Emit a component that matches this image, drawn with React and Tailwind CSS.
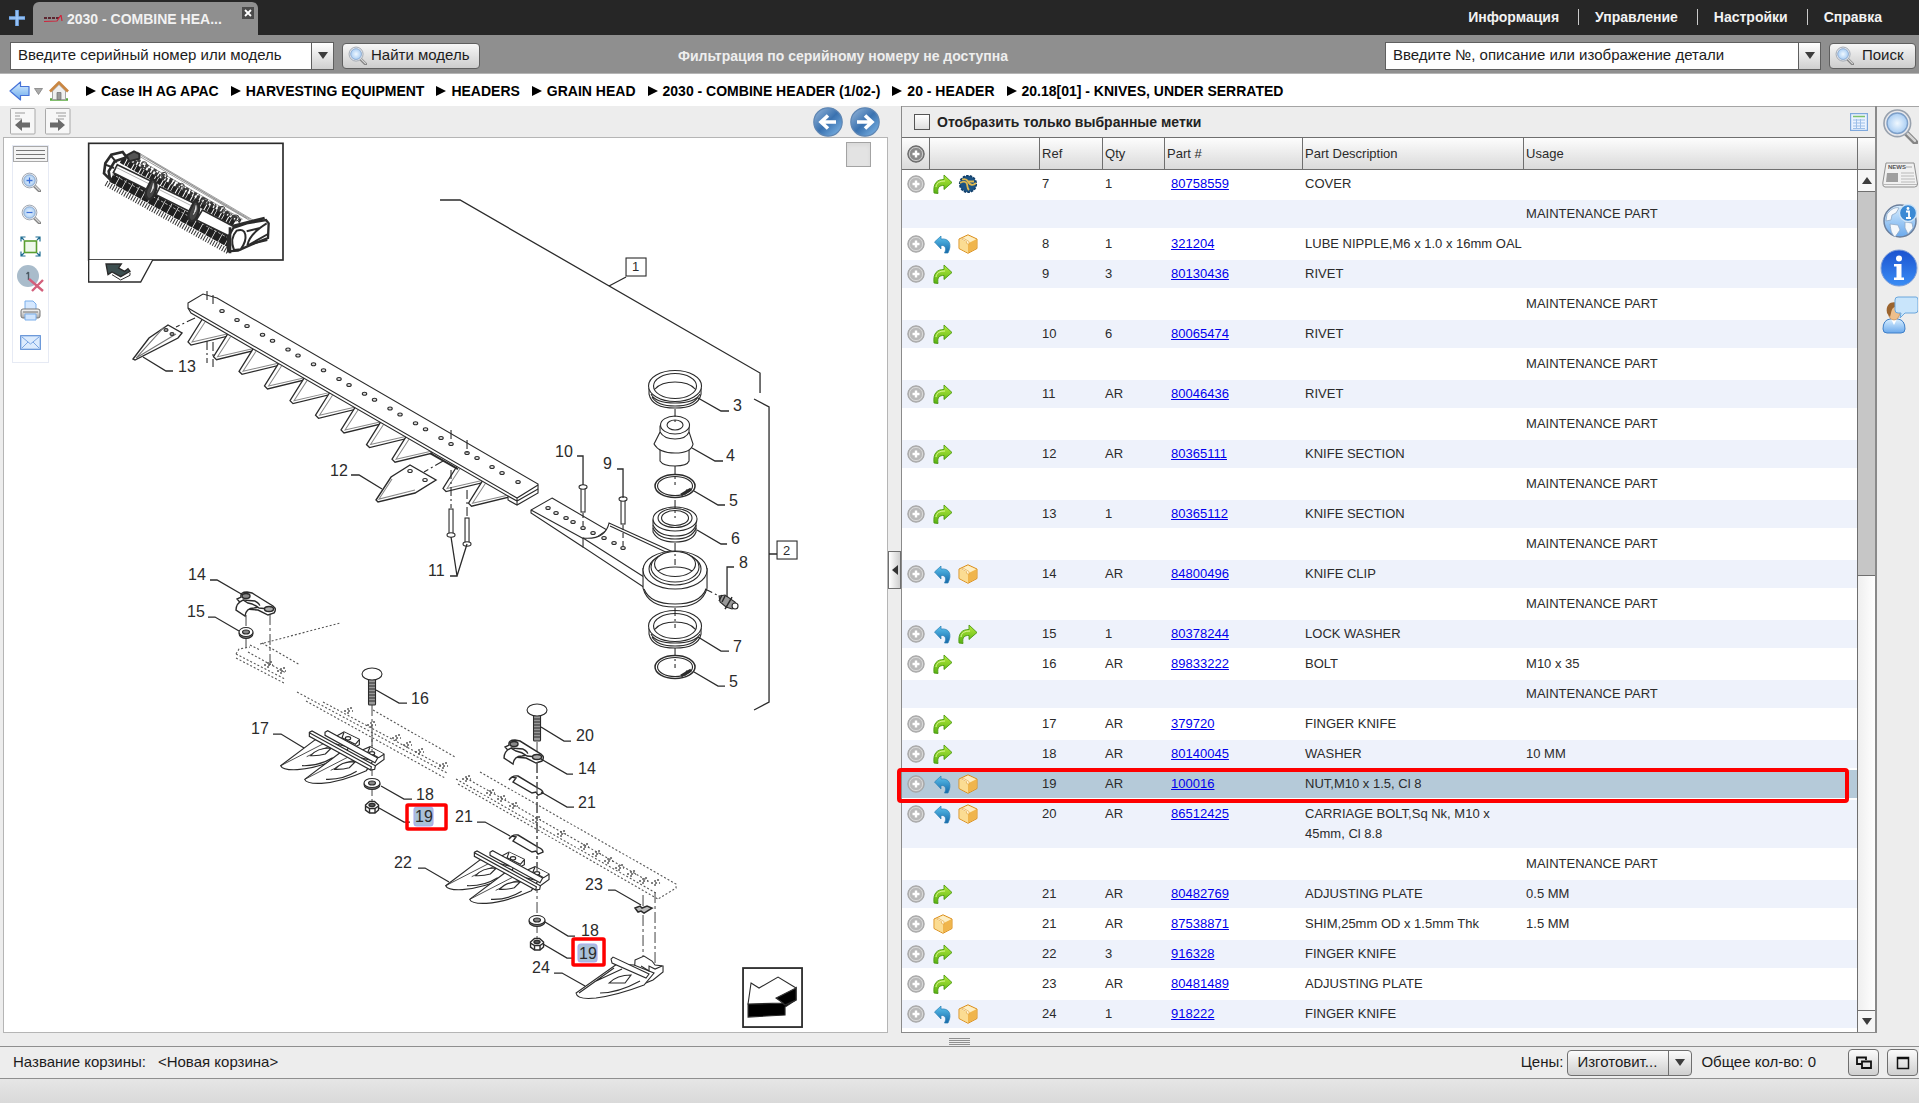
import { useState } from 'react'
import clsx from 'clsx'

const MAINT = { usage: 'MAINTENANCE PART' }

const rows = [
  { ref: '7', qty: '1', part: '80758559', desc: 'COVER', icons: ['next', 'reman'] },
  MAINT,
  { ref: '8', qty: '1', part: '321204', desc: 'LUBE NIPPLE,M6 x 1.0 x 16mm OAL', icons: ['prev', 'box'] },
  { ref: '9', qty: '3', part: '80130436', desc: 'RIVET', icons: ['next'] },
  MAINT,
  { ref: '10', qty: '6', part: '80065474', desc: 'RIVET', icons: ['next'] },
  MAINT,
  { ref: '11', qty: 'AR', part: '80046436', desc: 'RIVET', icons: ['next'] },
  MAINT,
  { ref: '12', qty: 'AR', part: '80365111', desc: 'KNIFE SECTION', icons: ['next'] },
  MAINT,
  { ref: '13', qty: '1', part: '80365112', desc: 'KNIFE SECTION', icons: ['next'] },
  MAINT,
  { ref: '14', qty: 'AR', part: '84800496', desc: 'KNIFE CLIP', icons: ['prev', 'box'] },
  MAINT,
  { ref: '15', qty: '1', part: '80378244', desc: 'LOCK WASHER', icons: ['prev', 'next'] },
  { ref: '16', qty: 'AR', part: '89833222', desc: 'BOLT', usage: 'M10 x 35', icons: ['next'] },
  MAINT,
  { ref: '17', qty: 'AR', part: '379720', desc: 'FINGER KNIFE', icons: ['next'] },
  { ref: '18', qty: 'AR', part: '80140045', desc: 'WASHER', usage: '10 MM', icons: ['next'] },
  { ref: '19', qty: 'AR', part: '100016', desc: 'NUT,M10 x 1.5, Cl 8', icons: ['prev', 'box'], selected: true },
  { ref: '20', qty: 'AR', part: '86512425', desc: 'CARRIAGE BOLT,Sq Nk, M10 x 45mm, Cl 8.8', icons: ['prev', 'box'] },
  MAINT,
  { ref: '21', qty: 'AR', part: '80482769', desc: 'ADJUSTING PLATE', usage: '0.5 MM', icons: ['next'] },
  { ref: '21', qty: 'AR', part: '87538871', desc: 'SHIM,25mm OD x 1.5mm Thk', usage: '1.5 MM', icons: ['box'] },
  { ref: '22', qty: '3', part: '916328', desc: 'FINGER KNIFE', icons: ['next'] },
  { ref: '23', qty: 'AR', part: '80481489', desc: 'ADJUSTING PLATE', icons: ['next'] },
  { ref: '24', qty: '1', part: '918222', desc: 'FINGER KNIFE', icons: ['prev', 'box'] },
]

const crumbs = [
  'Case IH AG APAC',
  'HARVESTING EQUIPMENT',
  'HEADERS',
  'GRAIN HEAD',
  '2030 - COMBINE HEADER (1/02-)',
  '20 - HEADER',
  '20.18[01] - KNIVES, UNDER SERRATED',
]

const menu = ['Информация', 'Управление', 'Настройки', 'Справка']

/* ---------- icons ---------- */

const Defs = () => (
  <svg className="absolute size-0" aria-hidden="true">
    <defs>
      <linearGradient id="green" x1="0" y1="0" x2="0" y2="1">
        <stop offset="0" stopColor="#b6ec3c" />
        <stop offset="1" stopColor="#57b012" />
      </linearGradient>
      <linearGradient id="teal" x1="0" y1="0" x2="0" y2="1">
        <stop offset="0" stopColor="#5cc3ee" />
        <stop offset="1" stopColor="#1668a8" />
      </linearGradient>
      <linearGradient id="sky" x1="0" y1="0" x2="0" y2="1">
        <stop offset="0" stopColor="#d9efff" />
        <stop offset="1" stopColor="#6ba9ec" />
      </linearGradient>
      <linearGradient id="navy" x1="0" y1="0" x2="1" y2="1">
        <stop offset="0" stopColor="#9dbbdc" />
        <stop offset="0.5" stopColor="#3a72b0" />
        <stop offset="1" stopColor="#86bdec" />
      </linearGradient>
      <linearGradient id="royal" x1="0" y1="0" x2="0" y2="1">
        <stop offset="0" stopColor="#1b52cf" />
        <stop offset="1" stopColor="#3a8df5" />
      </linearGradient>
      <linearGradient id="steel" x1="0" y1="0" x2="0" y2="1">
        <stop offset="0" stopColor="#fafafa" />
        <stop offset="1" stopColor="#a8a8a8" />
      </linearGradient>
      <radialGradient id="lens">
        <stop offset="0" stopColor="#f0f8ff" />
        <stop offset="1" stopColor="#a9cdf3" />
      </radialGradient>
    </defs>
  </svg>
)

const PlusCircle = ({ dark }) => (
  <svg viewBox="0 0 18 18" className="size-[18px]">
    <circle cx="9" cy="9" r="8.2" fill={dark ? '#8a8a8a' : '#b9b9b9'} stroke={dark ? '#5e5e5e' : '#a2a2a2'} />
    <circle cx="9" cy="9" r="6.6" fill="none" stroke={dark ? '#c9c9c9' : '#d8d8d8'} />
    <path d="M9 5.500v7M5.500 9h7" stroke="#fff" strokeWidth="2.4" />
  </svg>
)

const NextIcon = () => (
  <svg viewBox="0 0 20 20" className="size-5">
    <path
      d="M1 19C0 9 4 5.500 11 5.500V1l8 7.500-8 7V11.500C6.500 11.300 4 13 5 19.500z"
      fill="url(#green)"
      stroke="#4c9a12"
      strokeWidth="0.9"
      strokeLinejoin="round"
    />
    <path d="M3 13c.5-4 3.500-6 9-6" fill="none" stroke="#dcf89a" strokeWidth="1" />
  </svg>
)

const PrevIcon = () => (
  <svg viewBox="0 0 20 20" className="size-5">
    <path
      d="M1.500 8 8 2v3c8-1 11.500 5 7 14h-3.500C14 14 12 11 8 11.500V15z"
      fill="url(#teal)"
      stroke="#2a7fb5"
      strokeWidth="0.7"
      strokeLinejoin="round"
    />
  </svg>
)

const BoxIcon = () => (
  <svg viewBox="0 0 20 20" className="size-5">
    <path d="M10 .8 19 5v9.500L10 19.300 1 14.500V5z" fill="#f8cf74" stroke="#d98e1f" strokeWidth="1" strokeLinejoin="round" />
    <path d="M1.600 5.300 10 9.500v9.200l-8.400-4.500z" fill="#fbdc92" />
    <path d="M18.400 5.300 10 9.500v9.200l8.400-4.500z" fill="#f0b54c" />
    <path d="M10 1.500 18 5.200 10 9.200 2 5.200z" fill="#fdeec4" />
    <path d="m5 4 6 3.500v3l-2.500-1.200V7.500L3.500 5z" fill="#fff6da" stroke="#e0a038" strokeWidth="0.6" />
  </svg>
)

const RemanIcon = () => (
  <svg viewBox="0 0 20 20" className="size-5">
    <circle cx="10" cy="10" r="8.300" fill="#1c5384" stroke="#0f3d68" strokeWidth="1.6" strokeDasharray="2.5 1.2" />
    <path
      d="M2 9c3-2 6-2 7 1 .5 2 0 4 2 6M18 9c-3 3-6 2-8-1M4 5.500c3-1 5 0 6 2h6"
      fill="none"
      stroke="#e0b950"
      strokeWidth="1.800"
    />
  </svg>
)

const rowIcons = { next: NextIcon, prev: PrevIcon, box: BoxIcon, reman: RemanIcon }

const Magnifier = ({ sign, className = 'size-5' }) => (
  <svg viewBox="0 0 20 20" className={className}>
    <path d="m13 13.500 5.500 5.500" stroke="#858585" strokeWidth="3.2" strokeLinecap="round" />
    <path d="m13.500 13.500 4.800 4.800" stroke="#d6d6d6" strokeWidth="1.3" strokeLinecap="round" />
    <circle cx="8.500" cy="8.500" r="7.400" fill="#e9e9ec" stroke="#98a1ad" strokeWidth="0.9" />
    <circle cx="8.500" cy="8.500" r="5.700" fill="url(#lens)" stroke="#7d9fc8" strokeWidth="0.8" />
    {sign === 'in' && <path d="M8.500 5.500v6M5.500 8.500h6" stroke="#3a6fd8" strokeWidth="1.3" />}
    {sign === 'out' && <path d="M5.500 8.500h6" stroke="#3a6fd8" strokeWidth="1.3" />}
  </svg>
)

const BackArrow = () => (
  <svg viewBox="0 0 21 20" className="h-5 w-[21px]">
    <path d="M1 10 11.500 1v4.500H20v9h-8.500V19z" fill="url(#sky)" stroke="#4673d8" strokeWidth="1.2" strokeLinejoin="round" />
  </svg>
)

const HomeIcon = () => (
  <svg viewBox="0 0 20 20" className="size-5">
    <path d="M1 18.500h18" stroke="#58a83e" strokeWidth="2.500" />
    <path d="M3.500 10v8.500h13V10L10 3.500z" fill="#efefef" stroke="#a5a5a5" />
    <path d="m1 10.500 9-9 9 9" fill="none" stroke="#c98642" strokeWidth="2.600" strokeLinejoin="round" />
    <path d="M8 11.500h4v7H8z" fill="#9a9a9a" stroke="#6e6e6e" strokeWidth="0.7" />
  </svg>
)

const PageIcon = ({ right }) => (
  <svg viewBox="0 0 26 27" className="h-[27px] w-[26px]">
    <rect x="0.500" y="0.500" width="24.500" height="25.500" rx="1" fill="#f7f7f7" stroke="#a9a9a9" />
    <path d={right ? 'M11 5h10M13 8h8M11 11h8' : 'M5 5h10M5 8h5M5 11h7'} stroke="#9b9b9b" />
    <path d={right ? 'M20 17l-7-6v3.500H5v5h8V23z' : 'M5 17l7-6v3.500h8v5h-8V23z'} fill="#6a6a6a" />
  </svg>
)

const RoundArrow = ({ right }) => (
  <svg viewBox="0 0 30 30" className="size-[30px]">
    <circle cx="15" cy="15" r="14.200" fill="url(#navy)" stroke="#5f86b3" strokeWidth="1.2" />
    <path
      d={right ? 'M7 15h14M15 8.500l7 6.500-7 6.500' : 'M23 15H9M15 8.500 8 15l7 6.500'}
      fill="none"
      stroke="#fff"
      strokeWidth="3.600"
    />
  </svg>
)

const FitIcon = () => (
  <svg viewBox="0 0 21 21" className="size-[21px]">
    <rect x="4.500" y="5" width="12" height="11.500" fill="#eef8ea" stroke="#5a9e30" strokeWidth="1.6" />
    <path
      d="M1 5.500V1h4.500M15.500 1H20v4.500M20 15.500V20h-4.500M5.500 20H1v-4.500M1 1l3 3M20 1l-3 3M20 20l-3-3M1 20l3-3"
      fill="none"
      stroke="#1f6d92"
      strokeWidth="1.2"
    />
  </svg>
)

const MarkerIcon = () => (
  <svg viewBox="0 0 27 27" className="size-[27px]">
    <circle cx="11" cy="11" r="11" fill="#a9bccb" />
    <path d="M11.500 7v8M9.500 9l2-2" stroke="#4c5a64" strokeWidth="1.4" />
    <path d="m12 14 14 12M26 15 15 26" stroke="#d3607c" strokeWidth="2.400" />
  </svg>
)

const PrintIcon = () => (
  <svg viewBox="0 0 21 21" className="size-[21px]">
    <path d="M5 1h8l3 3v6H5z" fill="#d5e8ff" stroke="#7aaeea" />
    <rect x="1" y="9" width="19" height="9" rx="2" fill="url(#steel)" stroke="#777" />
    <path d="M5 14h11v6H5z" fill="#cfe4fd" stroke="#7aaeea" />
    <path d="M3 12h15" stroke="#777" />
  </svg>
)

const MailIcon = () => (
  <svg viewBox="0 0 21 15" className="h-[15px] w-[21px]">
    <rect x="0.700" y="0.700" width="19.600" height="13.600" fill="#dcebfd" stroke="#5f8fd6" strokeWidth="1.2" />
    <path d="m2 2 8.500 7L19 2M2 13l6-6M19 13l-6-6" fill="none" stroke="#7ba6e2" />
  </svg>
)

const GridIcon = () => (
  <svg viewBox="0 0 18 18" className="size-[18px]">
    <rect x="0.600" y="0.600" width="16.800" height="16.800" fill="#eaf3ff" stroke="#7fa9dd" strokeWidth="1.2" />
    <path d="M3 3.500h12" stroke="#7cc26a" strokeWidth="1.5" />
    <path d="M3 7h12M3 10h12M3 13h12M3 15.500h12M6.500 6v10M10.500 6v10" stroke="#9dbfe8" />
  </svg>
)

const NewsIcon = () => (
  <svg viewBox="0 0 36 26" className="h-[26px] w-9">
    <path d="M4 1h28l3.500 21q0 3-3 3H3Q.5 25 .8 21z" fill="#f1f1f1" stroke="#8f8f8f" />
    <text x="6" y="7" fontSize="6" fontWeight="bold" fontFamily="Liberation Sans, sans-serif" fill="#555">
      NEWS
    </text>
    <path d="M24 5h6" stroke="#aaa" />
    <path d="M5 11h11v9H4z" fill="#9f9f9f" />
    <path d="M19 11h13M19 14h13M19 17h14M19 20h14M1 22.500h34" stroke="#b9b9b9" />
  </svg>
)

const GlobeIcon = () => (
  <svg viewBox="0 0 36 36" className="size-9">
    <circle cx="18" cy="18" r="16" fill="url(#sky)" stroke="#6b7f9c" strokeWidth="1.5" />
    <path
      d="M5 11c5-6 9-7 12-6l-3 5-4 2-1 5-5 1zM8 21l8 1 2 5-5 7c-4-4-4-6-5-13zM23 19l7 1 1 5-5 6-3-6z"
      fill="#f5f8fb"
      stroke="#8ea8c6"
      strokeWidth="0.8"
    />
    <circle cx="26" cy="10" r="8.500" fill="#3c8ad4" stroke="#cfe4f7" strokeWidth="1.3" />
    <path d="M24 8.500h3V15M24 15h5" fill="none" stroke="#fff" strokeWidth="1.8" />
    <circle cx="26" cy="5.500" r="1.400" fill="#fff" />
  </svg>
)

const InfoIcon = () => (
  <svg viewBox="0 0 38 38" className="size-[38px]">
    <circle cx="19" cy="19" r="18" fill="url(#royal)" stroke="#7f9fd8" />
    <circle cx="19" cy="9.500" r="3" fill="#fff" />
    <path d="M14 15h7.500v13.500H24V31H14v-2.500h2.500v-11H14z" fill="#fff" />
  </svg>
)

const PersonIcon = () => (
  <svg viewBox="0 0 36 38" className="h-[38px] w-9">
    <path d="M1 33q0-9 7-10h8q7 1 7 10 0 4-4 4H5q-4 0-4-4z" fill="url(#sky)" stroke="#3e7fc8" />
    <path d="m9 23 3 6 3-6z" fill="#fff" />
    <ellipse cx="12" cy="16" rx="6" ry="8" fill="#eebf8c" stroke="#b57b43" strokeWidth="0.6" />
    <path d="M5 17C3 7 11 5 15 7l2 3c-5 0-7 2-8 7l-1 4z" fill="#9b642e" />
    <path
      d="M16 1h18q2 0 2 3v10q0 3-3 3H23l-5 5 1-5h-3q-3 0-3-3V4q0-3 3-3z"
      fill="#c9e5fb"
      stroke="#6aa6dc"
    />
  </svg>
)

const Caret = ({ className }) => (
  <svg viewBox="0 0 10 7" className={clsx('h-[7px] w-[10px]', className)}>
    <path d="M0 0h10L5 7z" fill="#3c3c3c" />
  </svg>
)

/* ---------- exploded view ---------- */

const holes = [[222, 311], [451, 444], [467, 453], [477, 458], [492, 467], [502, 473], [518, 482]]
for (let k = 0; k < 9; k++) {
  holes.push([237 + k * 25.5, 320 + k * 14.75])
  if (k < 8) holes.push([247 + k * 25.5, 326 + k * 14.75])
}
const armHoles = [[548, 508], [556, 513], [566, 518], [573, 522], [583, 528], [593, 533], [604, 538], [614, 543], [623, 548]]
const teeth = [0, 1, 2, 3, 4, 5, 6, 7, 8, 10, 11]
const marks = [
  [269, 665], [282, 671], [349, 711], [372, 725], [397, 738], [408, 745], [420, 752], [444, 766], [467, 779],
  [491, 793], [502, 799], [514, 806], [537, 820], [562, 834], [585, 847], [597, 854], [609, 861], [620, 868],
  [632, 874], [644, 881], [656, 883],
]

const labels = [
  [733, 411, '3', 'M698 398l23 13h8'],
  [726, 461, '4', 'M692 448l23 13h8'],
  [729, 506, '5', 'M694 491l24 14h7'],
  [731, 544, '6', 'M697 530l24 14h6'],
  [733, 652, '7', 'M698 637l23 14h8'],
  [729, 687, '5', 'M694 672l24 14h7'],
  [739, 568, '8', 'M734 567h-7v30'],
  [555, 457, '10', 'M577 456h6v29'],
  [603, 469, '9', 'M617 469h6v29'],
  [428, 576, '11', 'M450 576h7l-6-39M457 576l10-32'],
  [330, 476, '12', 'M351 475h8l23 14'],
  [178, 372, '13', 'M173 371h-7l-23-14'],
  [188, 580, '14', 'M210 580h7l26 15'],
  [187, 617, '15', 'M208 617h7l24 14'],
  [411, 704, '16', 'M376 690l23 13h8'],
  [251, 734, '17', 'M273 734h8l23 14'],
  [416, 800, '18', 'M381 786l23 13h8'],
  [415, 822, '19', 'M379 808l25 14h6'],
  [455, 822, '21', 'M477 822h8l25 14'],
  [576, 741, '20', 'M541 727l23 14h7'],
  [578, 774, '14', 'M541 759l26 15h6'],
  [578, 808, '21', 'M541 792l26 15h7'],
  [394, 868, '22', 'M418 868h7l24 14'],
  [585, 890, '23', 'M608 890h7l26 15'],
  [581, 936, '18', 'M545 922l23 14h7'],
  [579, 959, '19', 'M543 944l24 14h5'],
  [532, 973, '24', 'M554 973h8l23 13'],
]

const Collar = ({ y }) => (
  <g transform={`translate(0 ${y})`}>
    <path d="M649 388v6q3 14 26 14t26-14v-6" />
    <path d="M652 397q5 9 23 9t23-9M651 394q4 9 24 9t25-9" />
    <ellipse cx="675" cy="386" rx="26.500" ry="15.500" />
    <ellipse cx="675" cy="386" rx="21.500" ry="12.500" />
    <path d="M655 389q6-7 20-7t20 7" fill="none" />
  </g>
)

const SnapRing = ({ y }) => (
  <g transform={`translate(0 ${y})`}>
    <ellipse cx="675" cy="486" rx="20" ry="11.500" strokeWidth="1.5" />
    <ellipse cx="675" cy="486" rx="17.500" ry="9.500" />
    <path d="M681 495l10-6M684 494l4-4" strokeWidth="3" />
  </g>
)

const Rivet = ({ x, y, flip }) => (
  <g transform={`translate(${x} ${y})`}>
    <rect x="-2" y="0" width="4" height="25" />
    <ellipse cx="0" cy={flip ? 26 : 0} rx="4" ry="2.200" />
  </g>
)

const Bolt = ({ x, y }) => (
  <g transform={`translate(${x} ${y})`}>
    <rect x="-3.500" y="5" width="7" height="26" rx="1" fill="#999" />
    <path d="M-3 9h6M-3 12h6M-3 15h6M-3 18h6M-3 21h6M-3 24h6M-3 27h6" />
    <ellipse cx="0" cy="0" rx="10" ry="6" />
  </g>
)

const Clip = ({ x, y }) => (
  <g transform={`translate(${x} ${y})`} strokeWidth="1.4">
    <path d="M241 597q-1-5 6-5l5 1 21 13q4 3 1 7l-6 2-10-5-12-1-9-10z" />
    <path d="M243 600q-7 3-7 10l9 6q1-8 9-8l5-1q2-3-4-6z" />
    <path d="M243 600l5 3q6 1 11 5l10 1" />
    <ellipse cx="246" cy="596" rx="4" ry="2.500" fill="#888" />
    <ellipse cx="269" cy="609" rx="4.500" ry="2.500" fill="#aaa" />
  </g>
)

const Washer = ({ x, y, r = 8 }) => (
  <g transform={`translate(${x} ${y})`}>
    <ellipse cx="0" cy="1.500" rx={r} ry="5" fill="#777" />
    <ellipse cx="0" cy="0" rx={r} ry="4.500" />
    <ellipse cx="0" cy="0" rx="3.500" ry="2" fill="#888" />
  </g>
)

const Nut = ({ x, y }) => (
  <g transform={`translate(${x} ${y})`} strokeWidth="1.4">
    <path d="M-6.500-2l4-3.500h5l4 3.500v5L3 6h-5.500l-4-3z" />
    <path d="M-6.500-1l4 2.500H3l3.500-2.500M-2.500 1.500V6M3 1.500V6" />
    <ellipse cx="0" cy="-2" rx="3" ry="1.500" fill="#666" />
  </g>
)

const Shim = ({ y }) => (
  <path
    transform={`translate(0 ${y})`}
    d="M509 780q3-5 9-4l20 12q5 2 5 5l-5 2-2-3-4 1-19-11 3-4-4-1z"
    strokeWidth="1.4"
  />
)

const Blade = () => (
  <>
    <path d="M137 208 32 287q6 14 50 12 60-4 135-38l20-30z" />
    <path d="M170 216 34 286M190 226q-20 4-80 34" fill="none" strokeWidth="2.500" />
    <path d="M96 287q50 2 92-24" fill="none" />
    <path d="M122 257q20-24 62-23l-18 18q-20 6-44 5z" />
  </>
)

// one double finger guard, drawn at three units to the pixel
const Guard = ({ x, y }) => (
  <g transform={`translate(${270 + x} ${670 + y}) scale(0.3333)`} strokeWidth="3.500">
    <path d="M200 198l22-12 46 22v16l-24 12z" />
    <path d="M222 187l-6 16 40 20 12-14" />
    <path d="M272 242l28-12 42 22v16l-30 22z" />
    <path d="M300 231l-6 14 32 18 16-10" />
    <ellipse cx="234" cy="205" rx="8" ry="5" />
    <ellipse cx="306" cy="250" rx="8" ry="5" />
    <Blade />
    <g transform="translate(72 41)">
      <Blade />
    </g>
    <path d="M165 187l8-5 150 82-8 14-150-82z" />
    <path d="M118 187l8-4 190 104-2 11-12 2L118 199z" />
    <path d="M118 188l186 102-2 10" fill="none" />
  </g>
)

const ReelSpan = ({ x, y }) => (
  <g transform={`translate(${x} ${y})`}>
    <path d="M8 0l102 50-10 26L-4 24z" strokeWidth="5" />
    <path d="M4 8l100 50" stroke="#888" strokeWidth="2" />
    <path d="M112 42q18 8 12 34t-22 28q-14-10-6-30z" fill="#444" strokeWidth="7" />
    <path d="M116 56q4 14-8 28" stroke="#ccc" strokeWidth="3" />
  </g>
)

const HeaderThumb = () => (
  <g transform="translate(84 138) scale(0.3333)" strokeWidth="4">
    <rect x="14" y="16" width="583" height="350" strokeWidth="5" />
    <path d="M14 366v66h156l36-66" />
    <path d="M66 378h46l-8 12 18 10 10-8 6 8-28 16-26-14-12 8z" fill="#3d4f50" />
    <path d="M138 404v8l-28 14-26-16" fill="none" strokeWidth="3" />

    <path d="M150 40l350 205M160 42l350 206M168 56l330 192M176 72l300 172M190 62l300 180" stroke="#8a8a8a" strokeWidth="2.500" />
    <path d="M150 60l320 186" stroke="#444" strokeWidth="8" strokeDasharray="3 9 10 6" />
    <path d="M112 66l340 190" strokeWidth="19" stroke="#222" strokeDasharray="13 3 7 2" />
    <path d="M140 66l330 184" strokeWidth="12" stroke="#333" strokeDasharray="5 6 9 4" />
    <path d="M84 116l354 196" strokeWidth="34" stroke="#1f1f1f" strokeDasharray="20 2" />
    <path d="M84 108l356 196" strokeWidth="3" stroke="#bbb" strokeDasharray="8 6" />
    <path d="M66 136l370 206" strokeWidth="17" stroke="#333" strokeDasharray="3 5" />
    <ReelSpan x={92} y={80} />
    <ReelSpan x={220} y={146} />
    <path d="M355 216l98 52-10 30-106-52z" strokeWidth="5" />
    <g fill="none" stroke="#444" strokeWidth="3">
      <circle cx="180" cy="80" r="9" />
      <circle cx="240" cy="112" r="9" />
      <circle cx="292" cy="145" r="9" />
      <circle cx="362" cy="190" r="9" />
      <circle cx="414" cy="214" r="9" />
      <circle cx="456" cy="240" r="9" />
    </g>
    <path d="M60 106l4-30 18-26 34-8 12 16-36 12-18 30 4 24z" strokeWidth="8" />
    <path d="M128 52l22-12 16 8v14l-30 8z" fill="#555" strokeWidth="6" />
    <path d="M64 80l26 10M80 52l18 22" fill="none" strokeWidth="6" />
    <path d="M432 340v-42l16-28 40-14 58-10 8 10-2 44-50 20-40 18z" strokeWidth="7" />
    <path d="M450 336q-14-34 8-58 22-8 26 12t-14 44z" strokeWidth="6" />
    <path d="M490 322q6-34 58-66M492 322l60-34M500 318l50-12M488 280l40-10" fill="none" strokeWidth="6" />
    <path d="M438 268v78M446 264l96-24" fill="none" strokeWidth="8" />
  </g>
)

const ExplodedView = () => (
  <svg
    viewBox="56 138 784 894"
    className="block min-w-0 flex-1"
    fill="#fff"
    stroke="#2b2b2b"
    strokeWidth="1.100"
    role="img"
    aria-label="KNIVES, UNDER SERRATED"
  >
    <HeaderThumb />

    {/* group brackets */}
    <path d="M440 200h20l300 173v20M626 277l-17 9" fill="none" strokeWidth="1.300" />
    <path d="M754 399l15 8v295l-15 8M769 554h8" fill="none" strokeWidth="1.300" />
    <rect x="626" y="258" width="20" height="18" />
    <rect x="777" y="541" width="20" height="18" />

    {/* knife bar */}
    {teeth.map((k) => (
      <g key={k} transform={`translate(${k * 25.5} ${k * 14.65})`} strokeWidth="1.300">
        <path d="M203 318l-15 24 3 3 37-9v-5z" />
        <path d="M205 322l-13 20 35-8" fill="none" stroke="#888" strokeWidth="1" />
      </g>
    ))}
    <path d="M188 303l15-9 14 4 321 186v9l-21 12-9-5v-4L191 313l-3-5z" />
    <path d="M188 308l329 190 21-13M517 498v7M508 496l9 5 21-12" fill="none" />
    <path d="M430 453l28 16" strokeWidth="2" />
    {holes.map(([x, y], i) => (
      <ellipse key={i} cx={x} cy={y} rx="2.200" ry="1.500" fill="#ddd" />
    ))}
    <path
      d="M207 291v12M213 295v12M207 341v22M213 342v25M451 430v13M467 440v13M451 470v38M467 490v26M195 318l-19 9M443 461l-19 11"
      fill="none"
      strokeDasharray="9 3 2 3"
    />
    <path d="M168 325l14 8-4 5-43 22-2-1 16-21z" strokeWidth="1.400" />
    <path d="M164 327l-28 31 40-24" fill="none" stroke="#777" />
    <ellipse cx="166" cy="330" rx="2" ry="1.500" fill="#999" />
    <ellipse cx="172" cy="334" rx="2" ry="1.500" fill="#999" />
    <path d="M410 465l26 15-21 13-37 9-2-2 15-23z" strokeWidth="1.400" />
    <path d="M392 479l-13 20 36-9" fill="none" stroke="#888" />
    <ellipse cx="410" cy="471" rx="2.200" ry="1.500" />
    <ellipse cx="425" cy="480" rx="2.200" ry="1.500" />
    <Rivet x={451} y={509} flip />
    <Rivet x={467} y={518} flip />

    {/* knife head arm */}
    <path d="M552 498l55 32-24 17-52-34v-3z" />
    <path d="M531 510l53 29" />
    <path d="M583 538q22 2 26-15l64 29-28 36-62-41z" />
    <path d="M583 538l61 39M610 526l60 28" />
    {armHoles.map(([x, y]) => (
      <ellipse key={x} cx={x} cy={y} rx="2.200" ry="1.500" fill="#ddd" />
    ))}
    <path d="M583 513v14M623 525v22" strokeDasharray="5 3" />
    <Rivet x={583} y={487} />
    <Rivet x={623} y={499} />

    {/* bearing stack */}
    <path d="M643 568v20q5 19 32 19t32-19v-20" />
    <path d="M644 589q6 15 31 15t31-15" fill="none" />
    <ellipse cx="675" cy="570" rx="32" ry="19" />
    <ellipse cx="675" cy="569" rx="26" ry="16" />
    <ellipse cx="675" cy="567" rx="24" ry="15" />
    <ellipse cx="675" cy="564" rx="20.500" ry="12.500" />
    <path d="M658 571q6-4 17-4t17 4" />
    <Collar y={0} />
    <path d="M660 445v16q3 5 15 5t14-5v-16z" />
    <path d="M660 426v6l-6 12q5 9 21 9t18-9l-4-12v-6z" />
    <path d="M660 432q4 7 15 7t14-7" />
    <ellipse cx="675" cy="425" rx="14.500" ry="9" />
    <ellipse cx="675" cy="425" rx="8" ry="5" />
    <SnapRing y={0} />
    <path d="M653 520v12q5 10 22 10t21-10v-12z" />
    <path d="M653 525q5 11 22 11t21-11M653 528q5 11 22 11t21-11" />
    <ellipse cx="675" cy="519" rx="22" ry="12" />
    <ellipse cx="675" cy="518" rx="17" ry="9.500" />
    <ellipse cx="675" cy="518" rx="13.500" ry="7.500" />
    <Collar y={240} />
    <SnapRing y={181} />
    <path
      d="M675 409v16M675 466v19M675 500v18M675 543v22M675 608v20M675 648v20M705 589l14 7"
      strokeDasharray="8 3 2 3"
      fill="none"
    />
    <path d="M719 596l6-1 10 7 2 5-5 2-6-2-6-5z" fill="#999" />
    <path d="M722 595l-3 6M725 596l-3 6M732 597l-7 12" strokeWidth="1.500" />
    <circle cx="735" cy="606" r="3" />

    {/* sickle bar ghost lines */}
    <g fill="none" stroke="#555" strokeDasharray="2 2">
      <path d="M236 654l49 25M236 658l48 25M236 654l3-5 11-2M248 652l38 21M260 644l80-21M262 643l38 22M250 645l10 5" />
      <path d="M297 692l150 81M306 701l139 77M323 702l119 64M373 710l82 47" />
      <path d="M456 779l200 114M458 784l200 115M480 772l196 112v4l-18 11M466 778l184 104" />
      {marks.map(([x, y]) => (
        <path key={`${x}-${y}`} d={`M${x - 5} ${y}h9M${x - 1} ${y - 3}v6M${x + 1} ${y - 3}h3`} strokeWidth="1.400" />
      ))}
    </g>

    <path
      d="M246 615v12M246 637v14M270 614v54M372 705v106M537 742v200M643 895v64M655 892v74"
      strokeDasharray="11 3 3 3"
      fill="none"
      stroke="#555"
    />
    <Clip x={0} y={0} />
    <Clip x={268} y={148} />
    <Washer x={246} y={632} r={7} />
    <Bolt x={372} y={674} />
    <Bolt x={537} y={710} />
    <Guard x={0} y={0} />
    <Guard x={165} y={120} />
    <Shim y={0} />
    <Shim y={59} />
    <path d="M537 762v110M372 735v20" strokeDasharray="11 3 3 3" stroke="#555" />
    <Washer x={372} y={783} />
    <Washer x={537} y={920} />
    <Nut x={372} y={807} />
    <Nut x={537} y={944} />
    <path d="M635 908l5-2 2 2 5-2 5 2-8 5-3-2-3 1z" strokeWidth="1.500" fill="#bbb" />

    {/* end guard */}
    <path d="M635 960l9-4 8 5 3 4 8 1v6l-10 8-10 4-9-6z" />
    <path d="M617 964l-41 29q1 7 20 5 22-3 48-13l10-12-20-8z" />
    <path d="M614 968l-35 25M622 969l-28 13M600 993q18 0 40-12" fill="none" />
    <path d="M609 983q8-8 22-8l-6 8z" />
    <path d="M611 959l2-2 36 17-3 4-34-15z" />
    <path d="M641 966l8 5v-5l6 3 7-3" fill="none" />

    {/* viewing direction */}
    <rect x="743" y="968" width="59" height="59" strokeWidth="1.800" />
    <path d="M748 1004l37-1 11-15v12l-11 7v8l-37 2z" fill="#000" />
    <path d="M776 998l20-10v12l-11 5z" fill="#000" />
    <path d="M751 983l8 5 19-11 18 11-20 10 7 5-35 1z" />

    {/* highlighted callouts */}
    <rect x="414" y="807" width="19" height="19" rx="3" fill="#a9c0d8" stroke="#aaa9ef" />
    <rect x="578" y="944" width="19" height="18" rx="3" fill="#a9c0d8" stroke="#aaa9ef" />

    {labels.map(([x, y, text, d]) => (
      <g key={`${x}-${y}`}>
        <path d={d} fill="none" strokeWidth="1.300" />
        <text x={x} y={y} fontSize="16" fontFamily="Liberation Sans, Arial, sans-serif" fill="#2b2b2b" stroke="none">
          {text}
        </text>
      </g>
    ))}
    <g fontSize="13" fontFamily="Liberation Sans, Arial, sans-serif" fill="#2b2b2b" stroke="none">
      <text x="632" y="271">1</text>
      <text x="783" y="555">2</text>
    </g>
    <rect x="407" y="805" width="39" height="24" rx="1" fill="none" stroke="#fe0000" strokeWidth="3.500" />
    <rect x="573" y="939" width="31" height="26" rx="1" fill="none" stroke="#fe0000" strokeWidth="3.500" />
  </svg>
)

/* ---------- layout pieces ---------- */

const Combo = ({ label, value, className }) => (
  <div className={clsx('flex h-7 border border-[#5f5f5f] bg-white', className)}>
    <input
      type="text"
      aria-label={label}
      defaultValue={value}
      className="min-w-0 flex-1 px-[7px] text-[15px] text-[#1c1c1c] outline-none"
    />
    <button
      type="button"
      aria-label={`${label}: список`}
      className="flex w-[22px] items-center justify-center border-l border-[#5f5f5f] bg-gradient-to-b from-white to-[#cfcfcf]"
    >
      <Caret />
    </button>
  </div>
)

const TopBar = () => (
  <header className="flex h-[35px] items-end bg-[#262626]">
    <button type="button" aria-label="Новая вкладка" className="flex h-[35px] w-[33px] items-center justify-center">
      <svg viewBox="0 0 16 16" className="size-4">
        <path d="M8 0v16M0 8h16" stroke="#78aef0" strokeWidth="3.600" />
        <path d="M8 1v14M1 8h14" stroke="#a8cdf8" strokeWidth="1.200" />
      </svg>
    </button>
    <div className="flex h-[33px] w-[225px] items-start rounded-t-md bg-[#8f8f8f] pt-[5px] pr-1 pl-[11px]">
      <svg viewBox="0 0 19 8" className="mt-2 mr-1 h-2 w-[19px]">
        <path d="M0 3h16" stroke="#5d2630" strokeWidth="2" strokeDasharray="3 1" />
        <path d="M0 6.500 13 6l4-6 1 6" fill="none" stroke="#d0243c" strokeWidth="1.200" />
      </svg>
      <span className="mt-[2px] flex-1 text-sm leading-5 font-bold whitespace-nowrap text-[#f2f2f2]">2030 - COMBINE HEA...</span>
      <button type="button" aria-label="Закрыть" className="flex size-3 items-center justify-center bg-[#4b4b4b]">
        <svg viewBox="0 0 10 10" className="size-[10px]">
          <path d="m2 2 6 6M8 2 2 8" stroke="#fff" strokeWidth="1.800" />
        </svg>
      </button>
    </div>
    <nav className="ml-auto flex h-[35px] items-center pr-[37px] pb-[2px]">
      {menu.map((item, i) => (
        <a
          key={item}
          href="#"
          className={clsx('text-sm leading-4 font-bold text-[#f2f2f2]', i > 0 && 'ml-[19px] border-l border-[#c9c9c9] pl-4')}
        >
          {item}
        </a>
      ))}
    </nav>
  </header>
)

const SearchBar = () => (
  <div className="flex h-[39px] items-center border-b border-[#b5b5b5] bg-[#8f8f8f] pt-[3px] pr-[3px] pl-[10px]">
    <Combo label="Модель" value="Введите серийный номер или модель" className="w-[324px]" />
    <button
      type="button"
      className="ml-2 flex h-[26px] w-[138px] items-center gap-1 rounded-sm border border-[#5f5f5f] bg-gradient-to-b from-[#f7f7f7] to-[#cdcdcd] pl-[5px] text-[15px] whitespace-nowrap text-[#1c1c1c]"
    >
      <Magnifier className="size-[19px]" />
      Найти модель
    </button>
    <p className="ml-[198px] flex-1 text-sm font-bold whitespace-nowrap text-[#eeeeee]">
      Фильтрация по серийному номеру не доступна
    </p>
    <Combo label="Деталь" value="Введите №, описание или изображение детали" className="w-[436px]" />
    <button
      type="button"
      className="ml-2 flex h-[26px] w-[87px] items-center gap-2 rounded-sm border border-[#5f5f5f] bg-gradient-to-b from-[#f7f7f7] to-[#cdcdcd] pl-[5px] text-[15px] text-[#1c1c1c]"
    >
      <Magnifier className="size-[19px]" />
      Поиск
    </button>
  </div>
)

const Breadcrumbs = () => (
  <nav className="flex h-8 items-center bg-white pt-[2px] pl-[9px] text-sm font-bold text-black">
    <button type="button" aria-label="Назад">
      <BackArrow />
    </button>
    <button type="button" aria-label="История" className="px-1">
      <svg viewBox="0 0 9 7" className="h-[7px] w-[9px]">
        <path d="M.5.500h8L4.500 6.500z" fill="#aaa" stroke="#777" strokeWidth="0.700" />
      </svg>
    </button>
    <a href="#" aria-label="Домой" className="mr-[5px] ml-[2px]">
      <HomeIcon />
    </a>
    {crumbs.map((crumb) => (
      <a key={crumb} href="#" className="ml-3 flex items-center gap-[5px] whitespace-nowrap">
        <svg viewBox="0 0 10 10" className="size-[10px]">
          <path d="M0 0l10 5-10 5z" />
        </svg>
        {crumb}
      </a>
    ))}
  </nav>
)

const tools = [
  ['Увеличить', <Magnifier key="i" sign="in" />],
  ['Уменьшить', <Magnifier key="i" sign="out" />],
  ['По размеру', <FitIcon key="i" />],
  ['Метки', <MarkerIcon key="i" />],
  ['Печать', <PrintIcon key="i" />],
  ['Почта', <MailIcon key="i" />],
]

const DrawingPane = () => (
  <section className="flex min-w-0 flex-[886] flex-col">
    <div className="flex h-8 items-center border-b border-[#b5b5b5] bg-[#ededed] pr-2 pl-[7px]">
      <button type="button" aria-label="Предыдущая страница">
        <PageIcon />
      </button>
      <button type="button" aria-label="Следующая страница" className="ml-[9px]">
        <PageIcon right />
      </button>
      <button type="button" aria-label="Назад по рисункам" className="ml-auto">
        <RoundArrow />
      </button>
      <button type="button" aria-label="Вперед по рисункам" className="ml-[7px]">
        <RoundArrow right />
      </button>
    </div>
    <div className="flex flex-1 items-start border-x border-b border-[#b5b5b5] bg-white pr-4">
      <div className="mt-[7px] mr-[7px] ml-2 w-[37px] shrink-0 border border-[#e6eaf4]">
        <div className="flex h-4 flex-col justify-center gap-[3px] border border-[#a9a9a9] bg-[#f4f4f4] px-[2px]">
          <div className="h-px bg-[#777]" />
          <div className="h-px bg-[#777]" />
          <div className="h-px bg-[#777]" />
        </div>
        <div className="flex flex-col items-center pt-1 pb-1">
          {tools.map(([label, icon]) => (
            <button key={label} type="button" aria-label={label} className="flex h-8 items-center">
              {icon}
            </button>
          ))}
        </div>
      </div>
      <ExplodedView />
      <button
        type="button"
        aria-label="Свернуть миниатюру"
        className="mt-1 ml-[6px] size-[25px] border border-[#a3a3a3] bg-[#e3e3e3] shadow-inner"
      />
    </div>
  </section>
)

const PartRow = ({ row, odd }) => (
  <tr className={clsx('relative', row.selected ? 'bg-[#b5cad9]' : odd ? 'bg-[#eef2fb]' : 'bg-white')}>
    <td className="h-[30px] border-b-2 border-white pt-[5px] pl-[5px] align-top">
      {row.ref && (
        <button type="button" aria-label={`Добавить ${row.part}`} className="block">
          <PlusCircle />
        </button>
      )}
      {row.selected && (
        <span className="pointer-events-none absolute -top-[2px] right-2 -bottom-[3px] -left-[5px] z-10 rounded-sm border-4 border-[#fe0000]" />
      )}
    </td>
    <td className="border-b-2 border-white pt-1 pl-[3px] align-top">
      <div className="flex gap-[5px]">
        {row.icons?.map((name) => {
          const Icon = rowIcons[name]
          return <Icon key={name} />
        })}
      </div>
    </td>
    <td className="border-b-2 border-white pt-1 pl-[2px] align-top">{row.ref}</td>
    <td className="border-b-2 border-white pt-1 pl-[2px] align-top">{row.qty}</td>
    <td className="border-b-2 border-white pt-1 pl-[6px] align-top">
      {row.part && (
        <a href="#" className="text-[#0000ee] underline">
          {row.part}
        </a>
      )}
    </td>
    <td className="border-b-2 border-white pt-1 pb-1 pl-[2px] align-top">{row.desc}</td>
    <td className="border-b-2 border-white pt-1 pl-[2px] align-top">{row.usage}</td>
  </tr>
)

const PartsPane = () => {
  const [onlyMarked, setOnlyMarked] = useState(false)
  const visible = onlyMarked ? rows.filter((row) => row.selected) : rows

  return (
    <section className="flex min-w-0 flex-[974] flex-col border-x border-b border-[#8a8a8a] border-r-2 bg-white">
      <div className="flex h-8 items-center border-t border-b border-t-[#a5a5a5] border-b-[#6f6f6f] bg-[#ededed] pr-[7px] pl-3">
        <input
          id="marked"
          type="checkbox"
          checked={onlyMarked}
          onChange={(e) => setOnlyMarked(e.target.checked)}
          className="size-4 appearance-none border border-[#555] bg-gradient-to-b from-white to-[#dedede] checked:bg-[#555]"
        />
        <label htmlFor="marked" className="ml-[7px] text-sm font-bold text-[#222]">
          Отобразить только выбранные метки
        </label>
        <button type="button" aria-label="Вид таблицы" className="ml-auto">
          <GridIcon />
        </button>
      </div>
      <div className="flex flex-1 items-stretch">
        <div className="min-w-0 flex-1">
          <table className="w-full table-fixed border-separate border-spacing-0 text-[13px] leading-5 text-[#2b2b2b]">
            <colgroup>
              <col className="w-[28px]" />
              <col className="w-[110px]" />
              <col className="w-[63px]" />
              <col className="w-[62px]" />
              <col className="w-[138px]" />
              <col className="w-[221px]" />
              <col />
            </colgroup>
            <thead>
              <tr className="bg-gradient-to-b from-[#fdfdfd] to-[#d9d9d9] text-left">
                <th className="h-8 border-r border-b border-[#6f6f6f] pl-[5px]">
                  <button type="button" aria-label="Добавить все" className="block">
                    <PlusCircle dark />
                  </button>
                </th>
                <th className="border-r border-b border-[#6f6f6f]" />
                {['Ref', 'Qty', 'Part #', 'Part Description'].map((name) => (
                  <th key={name} className="border-r border-b border-[#6f6f6f] pl-[2px] font-normal">
                    {name}
                  </th>
                ))}
                <th className="border-b border-[#6f6f6f] pl-[2px] font-normal">Usage</th>
              </tr>
            </thead>
            <tbody>
              {visible.map((row, i) => (
                <PartRow key={i} row={row} odd={i % 2 === 1} />
              ))}
            </tbody>
          </table>
        </div>
        <div className="flex w-[18px] flex-col border-l border-[#6f6f6f]">
          <div className="h-8 border-b border-[#6f6f6f] bg-gradient-to-b from-[#fdfdfd] to-[#d9d9d9]" />
          <button type="button" aria-label="Вверх" className="flex h-[21px] items-center justify-center bg-[#f6f6f6]">
            <Caret className="rotate-180" />
          </button>
          <div className="flex-[384] border-y border-[#6f6f6f] bg-[#c6c6c6]" />
          <div className="flex-[435] bg-gradient-to-r from-[#efefef] to-white" />
          <button
            type="button"
            aria-label="Вниз"
            className="flex h-[22px] items-center justify-center border-t border-[#6f6f6f] bg-[#f6f6f6]"
          >
            <Caret />
          </button>
        </div>
      </div>
    </section>
  )
}

const SideBar = () => (
  <aside className="flex w-[42px] shrink-0 flex-col items-start overflow-hidden border-t border-[#a5a5a5] bg-[#ededed] pl-[5px]">
    <button type="button" aria-label="Поиск" className="mt-px mb-[18px]">
      <Magnifier className="block size-9" />
    </button>
    <button type="button" aria-label="Новости" className="mb-[15px]">
      <NewsIcon />
    </button>
    <button type="button" aria-label="Сайт" className="mb-[10px]">
      <GlobeIcon />
    </button>
    <button type="button" aria-label="Информация" className="-ml-[2px] mb-[9px]">
      <InfoIcon />
    </button>
    <button type="button" aria-label="Поддержка">
      <PersonIcon />
    </button>
  </aside>
)

const winButton =
  'flex h-[27px] w-[31px] items-center justify-center rounded-sm border border-[#6f6f6f] bg-gradient-to-b from-[#fbfbfb] to-[#cfcfcf]'

const CartBar = () => (
  <footer>
    <div className="flex h-[33px] items-center border-y border-[#8f8f8f] bg-[#ededed] pr-px pl-[13px] text-[15px] text-[#1c1c1c]">
      <span>Название корзины:</span>
      <span className="ml-3">&lt;Новая корзина&gt;</span>
      <label htmlFor="prices" className="mr-1 ml-auto">
        Цены:
      </label>
      <div className="flex h-[26px] w-[125px] items-stretch rounded-sm border border-[#6f6f6f] bg-gradient-to-b from-[#fbfbfb] to-[#cfcfcf]">
        <select id="prices" className="min-w-0 flex-1 appearance-none border-r border-[#6f6f6f] pl-[9px] outline-none">
          <option>Изготовит...</option>
        </select>
        <span className="flex w-[22px] items-center justify-center">
          <Caret />
        </span>
      </div>
      <span className="mr-8 ml-[9px]">Общее кол-во: 0</span>
      <button type="button" aria-label="Восстановить" className={winButton}>
        <svg viewBox="0 0 16 14" className="h-[14px] w-4" fill="none" stroke="#111" strokeWidth="1.800">
          <path d="M10 4V1.500H1V8h5" />
          <path d="M6 5.500h9V12H6z" />
        </svg>
      </button>
      <button type="button" aria-label="Развернуть" className={clsx(winButton, 'ml-2')}>
        <svg viewBox="0 0 14 14" className="size-[14px]" fill="none" stroke="#111" strokeWidth="1.500">
          <path d="M1.500 1.500h11v11h-11zM1 2.500h12" />
        </svg>
      </button>
    </div>
    <div className="h-6 bg-gradient-to-b from-[#e6e6e6] to-[#d9d9d9]" />
  </footer>
)

export default function App() {
  return (
    <div className="flex min-h-screen flex-col bg-[#ededed] font-['Liberation_Sans',Arial,sans-serif]">
      <Defs />
      <TopBar />
      <SearchBar />
      <Breadcrumbs />
      <main className="flex flex-1 pl-[3px]">
        <DrawingPane />
        <button
          type="button"
          aria-label="Свернуть панель"
          className="my-auto flex h-[38px] w-[13px] shrink-0 items-center justify-center border border-[#6f6f6f] bg-gradient-to-r from-white to-[#cfcfcf]"
        >
          <svg viewBox="0 0 6 10" className="h-[10px] w-[6px]">
            <path d="M6 0v10L0 5z" fill="#333" />
          </svg>
        </button>
        <PartsPane />
        <SideBar />
      </main>
      <div className="flex h-[13px] items-center justify-center">
        <div className="flex w-[21px] flex-col gap-px pt-1">
          <div className="h-px bg-[#8f8f8f]" />
          <div className="h-px bg-[#8f8f8f]" />
          <div className="h-px bg-[#8f8f8f]" />
          <div className="h-px bg-[#8f8f8f]" />
        </div>
      </div>
      <CartBar />
    </div>
  )
}
